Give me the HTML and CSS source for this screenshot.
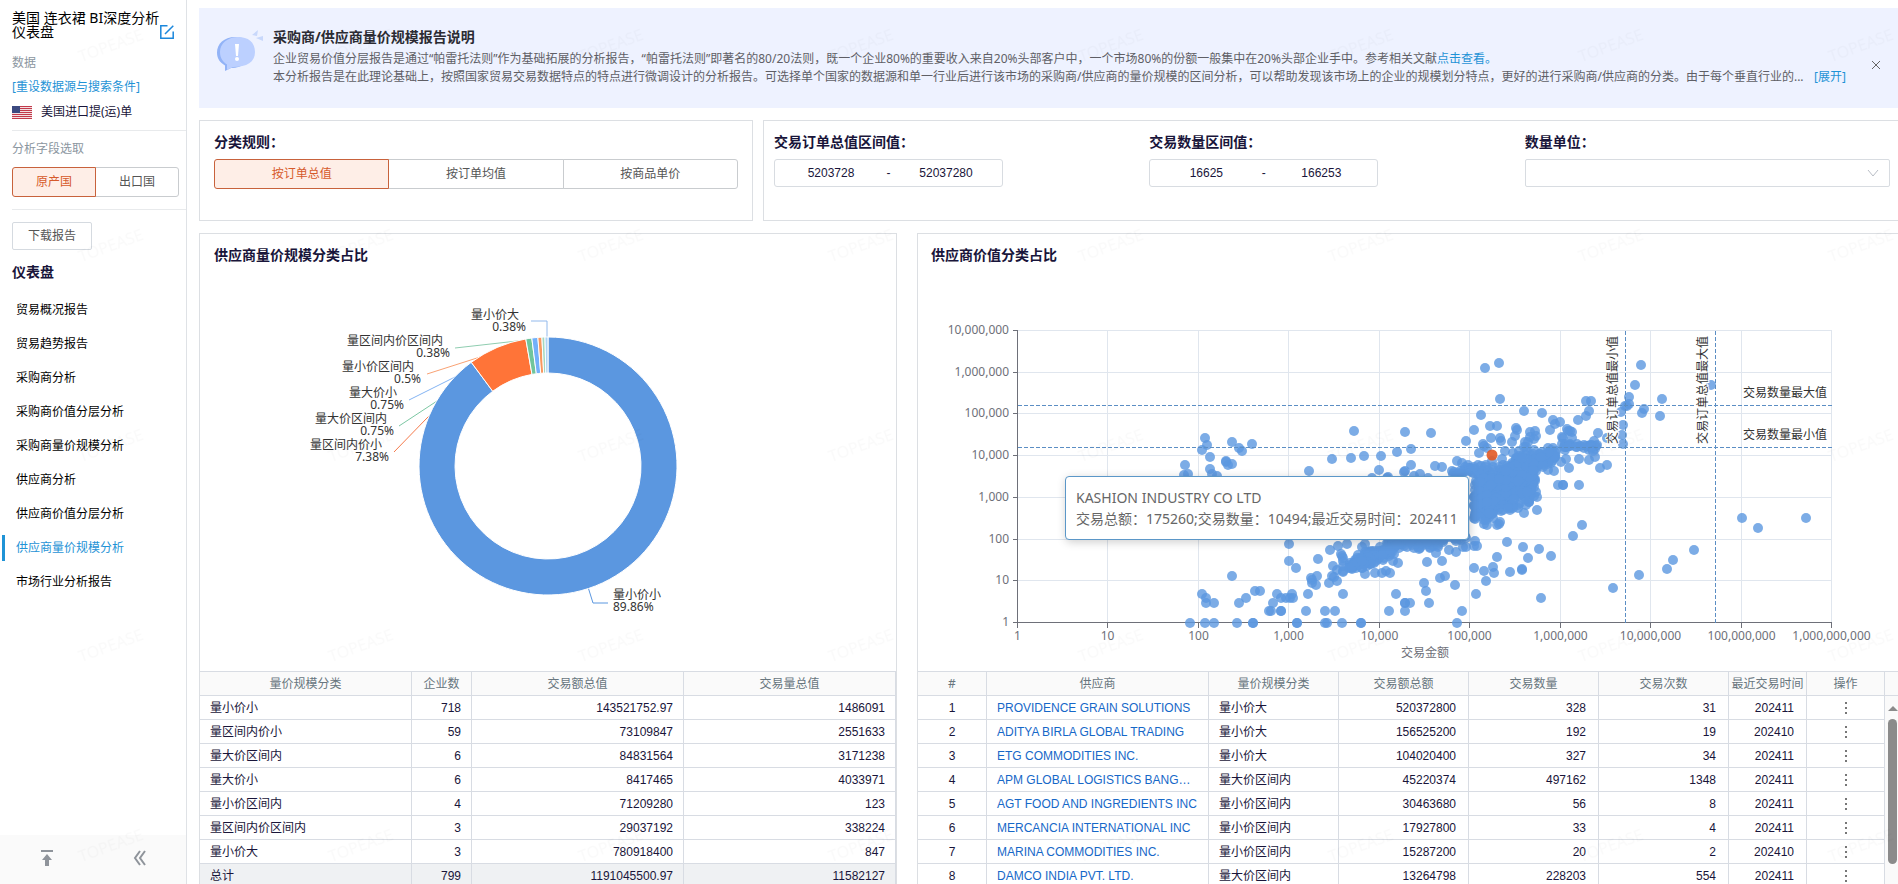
FILE: index.html
```html
<!doctype html>
<html lang="zh-CN">
<head>
  <meta charset="utf-8">
  <title>美国 连衣裙 BI深度分析仪表盘</title>
  <link rel="stylesheet" href="styles.css">
</head>
<body>

<aside class="sidebar">
  <div class="side-title">
    <h1>美国 连衣裙 BI深度分析仪表盘</h1>
    <button class="icon-btn" type="button" aria-label="编辑">
      <svg width="14" height="14" viewBox="0 0 14 14" fill="none" stroke="#1b87dc" stroke-width="1.5"><path d="M7.5 .8H.8v12.4h12.4V6.5M5 9l8.3-8.3"/></svg>
    </button>
  </div>
  <p class="side-label">数据</p>
  <a class="reset" href="#">[重设数据源与搜索条件]</a>
  <div class="source">
    <svg width="20" height="13" viewBox="0 0 20 13">
      <path fill="#f3dfe2" d="M0 0h20v13H0z"/>
      <path stroke="#c23a4b" d="M0 .5h20M0 2.5h20M0 4.5h20M0 6.5h20M0 8.5h20M0 10.5h20M0 12.5h20"/>
      <path fill="#3c4a80" d="M0 0h8v7H0z"/>
    </svg>
    <span>美国进口提(运)单</span>
  </div>
  <div class="side-group">
    <p class="side-label">分析字段选取</p>
    <div class="segment">
      <button class="on" type="button">原产国</button>
      <button type="button">出口国</button>
    </div>
  </div>
  <div class="side-group">
    <button class="download" type="button">下载报告</button>
  </div>
  <h2 class="nav-title">仪表盘</h2>
  <nav class="nav">
    <a href="#">贸易概况报告</a>
    <a href="#">贸易趋势报告</a>
    <a href="#">采购商分析</a>
    <a href="#">采购商价值分层分析</a>
    <a href="#">采购商量价规模分析</a>
    <a href="#">供应商分析</a>
    <a href="#">供应商价值分层分析</a>
    <a class="active" href="#">供应商量价规模分析</a>
    <a href="#">市场行业分析报告</a>
  </nav>
  <div class="side-foot">
    <button class="icon-btn" type="button" aria-label="回到顶部">
      <svg width="14" height="16" viewBox="0 0 14 16" fill="#8f949b"><path d="M1 0h12v2H1zM7 4l5 6H9v6H5v-6H2z"/></svg>
    </button>
    <button class="icon-btn" type="button" aria-label="收起">
      <svg width="14" height="16" viewBox="0 0 14 16" fill="none" stroke="#8f949b" stroke-width="2"><path d="M7 1L2 8l5 7M12 1L7 8l5 7"/></svg>
    </button>
  </div>
</aside>

<main class="main">
  <section class="banner">
    <svg class="banner-icon" width="46" height="42" viewBox="0 0 46 42">
      <path fill="#92b3f7" d="M18 7C7 7 0 14 0 22.500c0 6 3 10 8 13V41l6-3c12 0 20-7 20-16S29 7 18 7z"/>
      <path fill="#bcd0ff" d="M21 7C10 7 3 14 3 22c0 6 3 10 7 12.500V40l6-3c14 0 22-5 22-15S31 7 21 7z"/>
      <path fill="#fff" d="M18 14h4l-1 12h-2z"/><circle fill="#fff" cx="20" cy="29" r="2"/>
      <path fill="#c8d8fb" d="M35 5l6-5-1 6zM39 8l7-2v5z"/>
    </svg>
    <div class="banner-body">
      <h2>采购商/供应商量价规模报告说明</h2>
      <p>企业贸易价值分层报告是通过“帕雷托法则”作为基础拓展的分析报告，“帕雷托法则”即著名的80/20法则，既一个企业80%的重要收入来自20%头部客户中，一个市场80%的份额一般集中在20%头部企业手中。参考相关文献<a href="#">点击查看。</a></p>
      <div class="banner-more">
        <p>本分析报告是在此理论基础上，按照国家贸易交易数据特点的特点进行微调设计的分析报告。可选择单个国家的数据源和单一行业后进行该市场的采购商/供应商的量价规模的区间分析，可以帮助发现该市场上的企业的规模划分特点，更好的进行采购商/供应商的分类。由于每个垂直行业的...</p>
        <a href="#">[展开]</a>
      </div>
    </div>
    <button class="icon-btn" type="button" aria-label="关闭">
      <svg width="10" height="10" viewBox="0 0 10 10" stroke="#666"><path d="M1 1l8 8M9 1L1 9"/></svg>
    </button>
  </section>

  <section class="filters">
    <div class="box">
      <h3>分类规则：</h3>
      <div class="segment">
        <button class="on" type="button">按订单总值</button>
        <button type="button">按订单均值</button>
        <button type="button">按商品单价</button>
      </div>
    </div>
    <div class="box box-ranges">
      <div>
        <label for="value-min">交易订单总值区间值：</label>
        <div class="range">
          <input id="value-min" type="text" value="5203728"><span>-</span><input type="text" value="52037280" aria-label="交易订单总值最大值">
        </div>
      </div>
      <div>
        <label for="qty-min">交易数量区间值：</label>
        <div class="range">
          <input id="qty-min" type="text" value="16625"><span>-</span><input type="text" value="166253" aria-label="交易数量最大值">
        </div>
      </div>
      <div>
        <label for="unit">数量单位：</label>
        <div class="select">
          <select id="unit"><option></option></select>
          <svg width="12" height="8" viewBox="0 0 12 8" fill="none" stroke="#b9bec6"><path d="M1 1l5 6 5-6"/></svg>
        </div>
      </div>
    </div>
  </section>

  <section class="panels">
    <div class="panel">
      <h3>供应商量价规模分类占比</h3>
      <svg class="chart" id="donut" viewBox="0 0 696 400"></svg>
      <table class="grid">
        <colgroup><col class="w212"><col class="w60"><col class="w212"><col class="w212"></colgroup>
        <thead>
          <tr><th>量价规模分类</th><th>企业数</th><th>交易额总值</th><th>交易量总值</th></tr>
        </thead>
        <tbody>
          <tr><td>量小价小</td><td class="num">718</td><td class="num">143521752.97</td><td class="num">1486091</td></tr>
          <tr><td>量区间内价小</td><td class="num">59</td><td class="num">73109847</td><td class="num">2551633</td></tr>
          <tr><td>量大价区间内</td><td class="num">6</td><td class="num">84831564</td><td class="num">3171238</td></tr>
          <tr><td>量大价小</td><td class="num">6</td><td class="num">8417465</td><td class="num">4033971</td></tr>
          <tr><td>量小价区间内</td><td class="num">4</td><td class="num">71209280</td><td class="num">123</td></tr>
          <tr><td>量区间内价区间内</td><td class="num">3</td><td class="num">29037192</td><td class="num">338224</td></tr>
          <tr><td>量小价大</td><td class="num">3</td><td class="num">780918400</td><td class="num">847</td></tr>
          <tr class="total"><td>总计</td><td class="num">799</td><td class="num">1191045500.97</td><td class="num">11582127</td></tr>
        </tbody>
      </table>
    </div>

    <div class="panel panel-right">
      <h3>供应商价值分类占比</h3>
      <div class="chart-wrap">
        <svg class="chart" id="scatter" viewBox="0 0 980 400"></svg>
        <div class="tooltip">KASHION INDUSTRY CO LTD<br>交易总额：175260;交易数量：10494;最近交易时间：202411</div>
      </div>
      <div class="table-wrap">
        <table class="grid suppliers">
          <colgroup><col class="w69"><col class="w222"><col class="w130"><col class="w130"><col class="w130"><col class="w130"><col class="w78"><col class="w78"></colgroup>
          <thead>
            <tr><th>#</th><th>供应商</th><th>量价规模分类</th><th>交易额总额</th><th>交易数量</th><th>交易次数</th><th class="tight">最近交易时间</th><th>操作</th></tr>
          </thead>
          <tbody id="suppliers"></tbody>
        </table>
        <div class="scroll">
          <div class="scroll-head"></div>
          <div class="scroll-up"></div>
          <div class="scroll-thumb"></div>
        </div>
      </div>
    </div>
  </section>
</main>

<svg class="watermark" aria-hidden="true">
  <defs>
    <pattern id="wm" width="250" height="200" patternUnits="userSpaceOnUse">
      <text x="111" y="51" text-anchor="middle" transform="rotate(-20 111 46)">TOPEASE</text>
    </pattern>
  </defs>
  <rect width="100%" height="100%" fill="url(#wm)"/>
</svg>

<script>
var suppliers = [
  ["PROVIDENCE GRAIN SOLUTIONS", "量小价大", 520372800, 328, 31, 202411],
  ["ADITYA BIRLA GLOBAL TRADING", "量小价大", 156525200, 192, 19, 202410],
  ["ETG COMMODITIES INC.", "量小价大", 104020400, 327, 34, 202411],
  ["APM GLOBAL LOGISTICS BANG…", "量大价区间内", 45220374, 497162, 1348, 202411],
  ["AGT FOOD AND INGREDIENTS INC", "量小价区间内", 30463680, 56, 8, 202411],
  ["MERCANCIA INTERNATIONAL INC", "量小价区间内", 17927800, 33, 4, 202411],
  ["MARINA COMMODITIES INC.", "量小价区间内", 15287200, 20, 2, 202410],
  ["DAMCO INDIA PVT. LTD.", "量大价区间内", 13264798, 228203, 554, 202411]
];
document.getElementById("suppliers").innerHTML = suppliers.map(function (s, i) {
  return '<tr><td class="mid">' + (i + 1) + '</td><td><a href="#">' + s[0] + '</a></td><td>' + s[1] + '</td>' +
    s.slice(2).map(function (n) { return '<td class="num">' + n + '</td>'; }).join("") +
    '<td class="mid"><button class="dots" type="button" aria-label="操作"><svg width="2" height="12" fill="#777"><path d="M0 0h2v2H0zM0 5h2v2H0zM0 10h2v2H0z"/></svg></button></td></tr>';
}).join("");

// ---- donut ----
var BLUE = "#5b97e0";
var slices = [
  [718, BLUE], [59, "#ff7438"], [6, "#70c59c"], [6, "#73b0fa"], [4, "#f9975e"], [3, "#a3d8bf"], [3, "#add3f5"]
];
// name, percent, right edge of the percent, y of the name, leader line
var labels = [
  ["量小价大", "0.38%", 326, 44, "331,50 347,50 347,66", "#92b9ec"],
  ["量区间内价区间内", "0.38%", 250, 70, "255,77 326,69 345,68", "#8fcdb0"],
  ["量小价区间内", "0.5%", 221, 96, "227,103 277,87 300,80", "#f9a274"],
  ["量大价小", "0.75%", 204, 122, "209,129 253,107 270,99", "#84b4f3"],
  ["量大价区间内", "0.75%", 194, 148, "199,155 237,130 250,121", "#7cc7a3"],
  ["量区间内价小", "7.38%", 189, 174, "194,181 227,147 240,134", "#f57a4b"]
];
var cx = 348, cy = 195, R = 129, r = 93;
function pt(rad, a) {
  return (cx + rad * Math.sin(a)).toFixed(2) + " " + (cy - rad * Math.cos(a)).toFixed(2);
}
var out = "";
labels.forEach(function (l) {
  out += '<polyline fill="none" stroke="' + l[5] + '" points="' + l[4] + '"/>' +
    '<text text-anchor="end" x="' + (l[2] - 7) + '" y="' + (l[3] + 4) + '">' + l[0] + '</text>' +
    '<text text-anchor="end" x="' + l[2] + '" y="' + (l[3] + 16) + '">' + l[1] + '</text>';
});
out += '<polyline fill="none" stroke="' + BLUE + '" points="388,316 393,332 408,332"/>' +
  '<text x="413" y="328">量小价小</text><text x="413" y="340">89.86%</text>';
var angle = 0;
slices.forEach(function (s) {
  var end = angle + s[0] / 799 * Math.PI * 2;
  var big = end - angle > Math.PI ? 1 : 0;
  out += '<path stroke="#fff" fill="' + s[1] + '" d="M' + pt(R, angle) + 'A' + R + ' ' + R + ' 0 ' + big + ' 1 ' + pt(R, end) +
    'L' + pt(r, end) + 'A' + r + ' ' + r + ' 0 ' + big + ' 0 ' + pt(r, angle) + 'Z"/>';
  angle = end;
});
document.getElementById("donut").innerHTML = out;

// ---- scatter, log/log ----
var x0 = 100, y0 = 352, w = 814, h = 292;
function fmt(p) { return Math.pow(10, p).toLocaleString("en-US"); }
out = "";
for (var i = 0; i <= 9; i++) {
  var x = Math.round(x0 + w / 9 * i) - 0.5;
  out += '<path class="' + (i ? "split" : "axis") + '" d="M' + x + ' ' + (y0 - h) + 'V' + y0 + '"/>' +
    '<path class="axis" d="M' + x + ' ' + y0 + 'v5"/>' +
    '<text class="tick" text-anchor="middle" x="' + x + '" y="369">' + fmt(i) + '</text>';
}
for (i = 0; i <= 7; i++) {
  var y = Math.round(y0 - h / 7 * i) - 0.5;
  out += '<path class="' + (i ? "split" : "axis") + '" d="M' + x0 + ' ' + y + 'h' + w + '"/>' +
    '<path class="axis" d="M' + (x0 - 5) + ' ' + y + 'h5"/>' +
    '<text class="tick" text-anchor="end" x="91" y="' + (y + 3) + '">' + fmt(i) + '</text>';
}
out += '<text class="tick" text-anchor="middle" x="507" y="386">交易金额</text>';

var dots = [
  287,167, 289,174, 284,179, 292,186, 267,194, 266,204, 270,203, 292,198, 294,203, 299,205, 314,171, 321,177,
  324,180, 334,173, 308,191, 310,194, 314,193, 308,190, 436,160, 487,161, 513,162, 414,188, 433,187, 446,185,
  463,185, 479,181, 493,178, 391,200, 461,199, 493,194, 486,201, 487,200, 454,207, 469,207, 470,206, 496,205,
  502,203, 510,207, 371,273, 412,279, 420,275, 429,273, 447,273, 444,276, 371,290, 378,297, 400,288, 424,285,
  423,283, 415,295, 419,299, 399,305, 393,307, 394,309, 394,312, 398,314, 414,305, 416,306, 411,312, 419,310,
  390,323, 388,340, 407,340, 417,340, 425,323, 314,305, 284,323, 288,327, 288,332, 296,332, 337,320, 342,320,
  328,327, 321,332, 359,323, 363,327, 368,327, 372,327, 375,327, 374,323, 355,332, 351,340, 353,340, 363,340,
  363,340, 272,352, 287,352, 296,352, 319,352, 335,352, 335,352, 379,352, 379,352, 407,352, 409,352, 424,352,
  443,352, 443,352, 447,303, 457,302, 464,302, 468,300, 472,302, 480,292, 475,290, 471,285, 509,291, 478,323,
  471,340, 487,332, 487,332, 492,332, 487,340, 506,312, 508,320, 511,332, 425,301, 425,300, 425,290, 425,295,
  425,287, 567,97, 581,92, 582,128, 563,144, 606,140, 624,142, 556,159, 572,155, 579,155, 598,157, 599,159,
  597,165, 612,161, 617,160, 635,149, 642,151, 637,153, 632,159, 660,149, 668,145, 671,140, 668,130, 673,130,
  680,162, 689,167, 517,195, 524,196, 539,190, 544,192, 548,170, 573,167, 582,167, 583,170, 594,171, 587,180,
  565,173, 566,175, 561,182, 560,194, 649,158, 650,160, 652,160, 654,161, 645,167, 644,166, 654,167, 676,170,
  678,175, 671,179, 677,186, 671,189, 661,188, 651,197, 648,188, 643,191, 689,194, 682,197, 661,214, 645,214,
  645,214, 640,214, 619,239, 606,242, 664,254, 655,265, 589,271, 579,286, 605,276, 621,278, 610,287, 633,285,
  556,297, 575,296, 576,302, 566,300, 592,301, 604,299, 604,298, 568,310, 558,323, 623,327, 544,340, 539,352,
  537,314, 527,305, 522,307, 524,290, 518,282, 531,279, 538,281, 559,275, 557,270, 556,275, 548,276, 545,276,
  723,94, 717,114, 711,126, 744,128, 711,133, 707,135, 709,135, 703,141, 726,138, 724,142, 742,145, 705,154,
  704,164, 705,173, 793,114, 824,247, 840,257, 888,247, 776,279, 755,289, 749,298, 721,304, 695,317,
  579,254, 581,253, 582,251, 569,254, 566,253, 612,166, 618,165, 610,171, 616,168, 607,171, 606,176, 609,180,
  595,182, 601,180, 569,177, 568,194, 574,190, 584,188, 592,239, 591,235, 600,237, 608,234, 619,226, 618,221
];
// crowded areas: count, x from, x to, y at left, y at right, spread up/down
var crowds = [
  [290, 556, 618, 230, 208, 24],
  [70, 560, 600, 208, 198, 14],
  [50, 556, 578, 238, 234, 14],
  [70, 600, 638, 195, 186, 18],
  [30, 640, 680, 175, 176, 4],
  [24, 534, 556, 202, 198, 7],
  [80, 432, 478, 292, 276, 9],
  [34, 430, 456, 296, 289, 6],
  [60, 470, 522, 273, 270, 8],
  [20, 520, 552, 267, 268, 6]
];
var seed = 7;
function rnd() {
  seed = (seed * 16807) % 2147483647;
  return seed / 2147483647;
}
crowds.forEach(function (c) {
  for (var n = 0; n < c[0]; n++) {
    var t = rnd();
    dots.push(Math.round(c[1] + (c[2] - c[1]) * t), Math.round(c[3] + (c[4] - c[3]) * t + (rnd() + rnd() - 1) * c[5]));
  }
});
for (i = 0; i < dots.length; i += 2) {
  out += '<circle class="dot" r="5" cx="' + dots[i] + '" cy="' + dots[i + 1] + '"/>';
}
out += '<circle class="dot hot" r="5.5" cx="574" cy="184"/>';

out += '<path class="mark" d="M707.5 60V352M797.5 60V352M100 134.5H914M100 176.5H914"/>' +
  '<text class="mark-label" text-anchor="end" x="909" y="126">交易数量最大值</text>' +
  '<text class="mark-label" text-anchor="end" x="909" y="168">交易数量最小值</text>' +
  '<text class="mark-label" transform="translate(699 173) rotate(-90)">交易订单总值最小值</text>' +
  '<text class="mark-label" transform="translate(789 173) rotate(-90)">交易订单总值最大值</text>';
document.getElementById("scatter").innerHTML = out;
</script>

</body>
</html>
```
FILE: styles.css
```css
* {
  box-sizing: border-box;
}
body {
  display: flex;
  height: 100vh;
  margin: 0;
  overflow: hidden;
  background: #fff;
  color: #19153a;
  font: 12px/18px "Noto Sans", "Noto Sans CJK SC", sans-serif;
}
h1, h2, h3, p {
  margin: 0;
}
a {
  color: #1f93d6;
  text-decoration: none;
}
button, input, select {
  font: inherit;
  color: inherit;
}
button {
  cursor: pointer;
}
.icon-btn {
  display: flex;
  padding: 0;
  border: 0;
  background: none;
}

/* sidebar */
.sidebar {
  display: flex;
  flex-direction: column;
  flex: none;
  width: 187px;
  border-right: 1px solid #dfe2e6;
}
.side-title {
  display: flex;
  align-items: flex-end;
  padding: 11px 12px 0;
  color: #000;
}
.side-title h1 {
  width: 148px;
  font-size: 14px;
  line-height: 14px;
  font-weight: normal;
}
.side-label {
  color: #8b969f;
}
.side-title + .side-label {
  margin: 15px 0 0 12px;
}
.reset {
  margin: 6px 12px 0;
}
.source {
  display: flex;
  align-items: center;
  gap: 9px;
  margin: 7px 12px 9px;
}
.side-group {
  margin-left: 12px;
  padding: 9px 7px 12px 0;
  border-top: 1px solid #e8eaec;
}
.side-group + .side-group {
  padding-top: 12px;
}
.segment {
  display: flex;
}
.side-group .segment {
  margin-top: 9px;
}
.segment button {
  flex: 1;
  height: 30px;
  padding: 0;
  margin-left: -1px;
  border: 1px solid #c9cccf;
  background: #fff;
  color: #555;
}
.segment button:first-child {
  margin-left: 0;
  border-radius: 3px 0 0 3px;
}
.segment button:last-child {
  border-radius: 0 3px 3px 0;
}
.segment button.on {
  z-index: 1;
  border-color: #c8623c;
  background: #feeee7;
  color: #d65a2b;
}
.download {
  width: 80px;
  height: 28px;
  padding: 0;
  border: 1px solid #d5dae0;
  border-radius: 2px;
  background: #fff;
  color: #555;
}
.nav-title {
  margin-left: 12px;
  font-size: 14px;
  line-height: 20px;
}
.nav {
  flex: 1;
  padding-top: 15px;
}
.nav a {
  display: block;
  height: 26px;
  margin: 0 0 8px 2px;
  border-left: 3px solid transparent;
  padding-left: 11px;
  line-height: 26px;
  color: #000;
}
.nav a.active {
  border-color: #1f93d6;
  color: #1f93d6;
}
.side-foot {
  display: flex;
  align-items: center;
  justify-content: space-between;
  height: 49px;
  padding: 0 39px 4px 40px;
  background: #fafafa;
}

/* main */
.main {
  flex: 1;
  min-width: 0;
  padding: 8px 0 0 12px;
}
.banner {
  display: flex;
  align-items: center;
  height: 100px;
  padding: 0 17px 0 18px;
  margin-bottom: 12px;
  background: #eef2ff;
  color: #5f5f66;
}
.banner-icon {
  flex: none;
  margin-bottom: 14px;
}
.banner-body {
  flex: 1;
  min-width: 0;
  margin: 0 25px 0 10px;
  align-self: flex-start;
  padding-top: 19px;
}
.banner h2 {
  margin-bottom: 3px;
  font-size: 14px;
  line-height: 20px;
  color: #2b2b33;
}
.banner p {
  white-space: nowrap;
  overflow: hidden;
}
.banner .icon-btn {
  padding-top: 14px;
}
.banner-more {
  display: flex;
  justify-content: space-between;
}
.filters {
  display: grid;
  grid-template-columns: 554fr 1135fr;
  gap: 10px;
}
.box {
  height: 101px;
  padding: 12px 14px;
  border: 1px solid #dcdfe3;
}
.box h3, .box label {
  display: block;
  margin-bottom: 8px;
  font-size: 14px;
  line-height: 18px;
  font-weight: bold;
}
.box-ranges {
  display: grid;
  grid-template-columns: repeat(3, 1fr);
  margin-right: -2px;
  padding: 12px 0 12px 10px;
  border-right: 0;
}
.range {
  display: flex;
  align-items: center;
  justify-content: center;
  width: 229px;
  height: 28px;
  border: 1px solid #d8dce1;
  border-radius: 3px;
  font-family: "Liberation Sans", sans-serif;
}
.range input {
  width: 100px;
  padding: 0;
  border: 0;
  background: none;
  text-align: center;
}
.range span {
  width: 15px;
  text-align: center;
}
.select {
  position: relative;
  margin-right: 10px;
}
.select select {
  display: block;
  width: 100%;
  height: 28px;
  border: 1px solid #d8dce1;
  border-radius: 2px;
  background: #fff;
  appearance: none;
}
.select svg {
  position: absolute;
  right: 11px;
  top: 10px;
}

/* panels */
.panels {
  display: grid;
  grid-template-columns: 698fr 981fr;
  gap: 20px;
  margin-top: 12px;
}
.panel {
  min-width: 0;
  border: 1px solid #dcdfe3;
}
.panel-right {
  border-right: 0;
}
.panel h3 {
  padding: 12px 14px 7px;
  font-size: 14px;
  line-height: 18px;
}
.panel-right h3 {
  padding-left: 13px;
}
.chart-wrap {
  position: relative;
}
.chart {
  display: block;
  width: 100%;
  font-size: 12px;
  fill: #333;
}
.split {
  stroke: #e0e6ee;
}
.axis {
  stroke: #6e7079;
}
.tick {
  fill: #6e7079;
}
.dot {
  fill: #5b97e0;
  fill-opacity: 0.8;
}
.dot.hot {
  fill: #e25a26;
  fill-opacity: 0.9;
}
.mark {
  stroke: #5b8ec4;
  stroke-dasharray: 4 2;
}
.mark-label {
  stroke: #fff;
  stroke-width: 2px;
  paint-order: stroke;
}
.tooltip {
  position: absolute;
  left: 15%;
  top: 205px;
  padding: 10px;
  border: 1px solid #5b97c8;
  border-radius: 4px;
  background: #fff;
  box-shadow: 1px 2px 10px rgba(0, 0, 0, 0.2);
  color: #666;
  font-size: 14px;
  line-height: 21px;
  white-space: nowrap;
}

.grid {
  width: 100%;
  table-layout: fixed;
  border-spacing: 0;
  border-top: 1px solid #d8dce3;
}
.w60 { width: 60px; }
.w69 { width: 69px; }
.w78 { width: 78px; }
.w130 { width: 130px; }
.w212 { width: 212px; }
.w222 { width: 222px; }
.grid th, .grid td {
  height: 24px;
  padding: 0 10px;
  border-right: 1px solid #d8dce3;
  border-bottom: 1px solid #d8dce3;
  line-height: 18px;
  white-space: nowrap;
  overflow: hidden;
}
.grid th {
  background: #fafafa;
  color: #68767e;
  font-weight: normal;
}
.grid th.tight {
  padding: 0;
}
.grid td {
  font-family: "Liberation Sans", "Noto Sans CJK SC", sans-serif;
}
.grid td.num {
  text-align: right;
}
.grid td.mid {
  text-align: center;
}
.suppliers td.num {
  padding-right: 12px;
}
.suppliers td a {
  color: #1668c8;
}
.total td {
  background: #eff1f3;
}
.dots {
  padding: 0;
  border: 0;
  background: none;
  vertical-align: middle;
}
.dots svg {
  display: block;
}
.table-wrap {
  display: flex;
}
.scroll {
  flex: none;
  width: 13px;
  background: #fafafa;
}
.scroll-head {
  height: 25px;
  border: solid #d8dce3;
  border-width: 1px 0;
}
.scroll-up {
  width: 0;
  margin: 10px 0 8px 3px;
  border: 5px solid transparent;
  border-top: 0;
  border-bottom-color: #8b8b8b;
}
.scroll-thumb {
  width: 9px;
  height: 145px;
  margin-left: 3px;
  border-radius: 5px;
  background: #8b8b8b;
}

.watermark {
  position: fixed;
  inset: 0;
  width: 100%;
  height: 100%;
  pointer-events: none;
  font-size: 16px;
  fill: rgba(0, 0, 0, 0.02);
}
```
